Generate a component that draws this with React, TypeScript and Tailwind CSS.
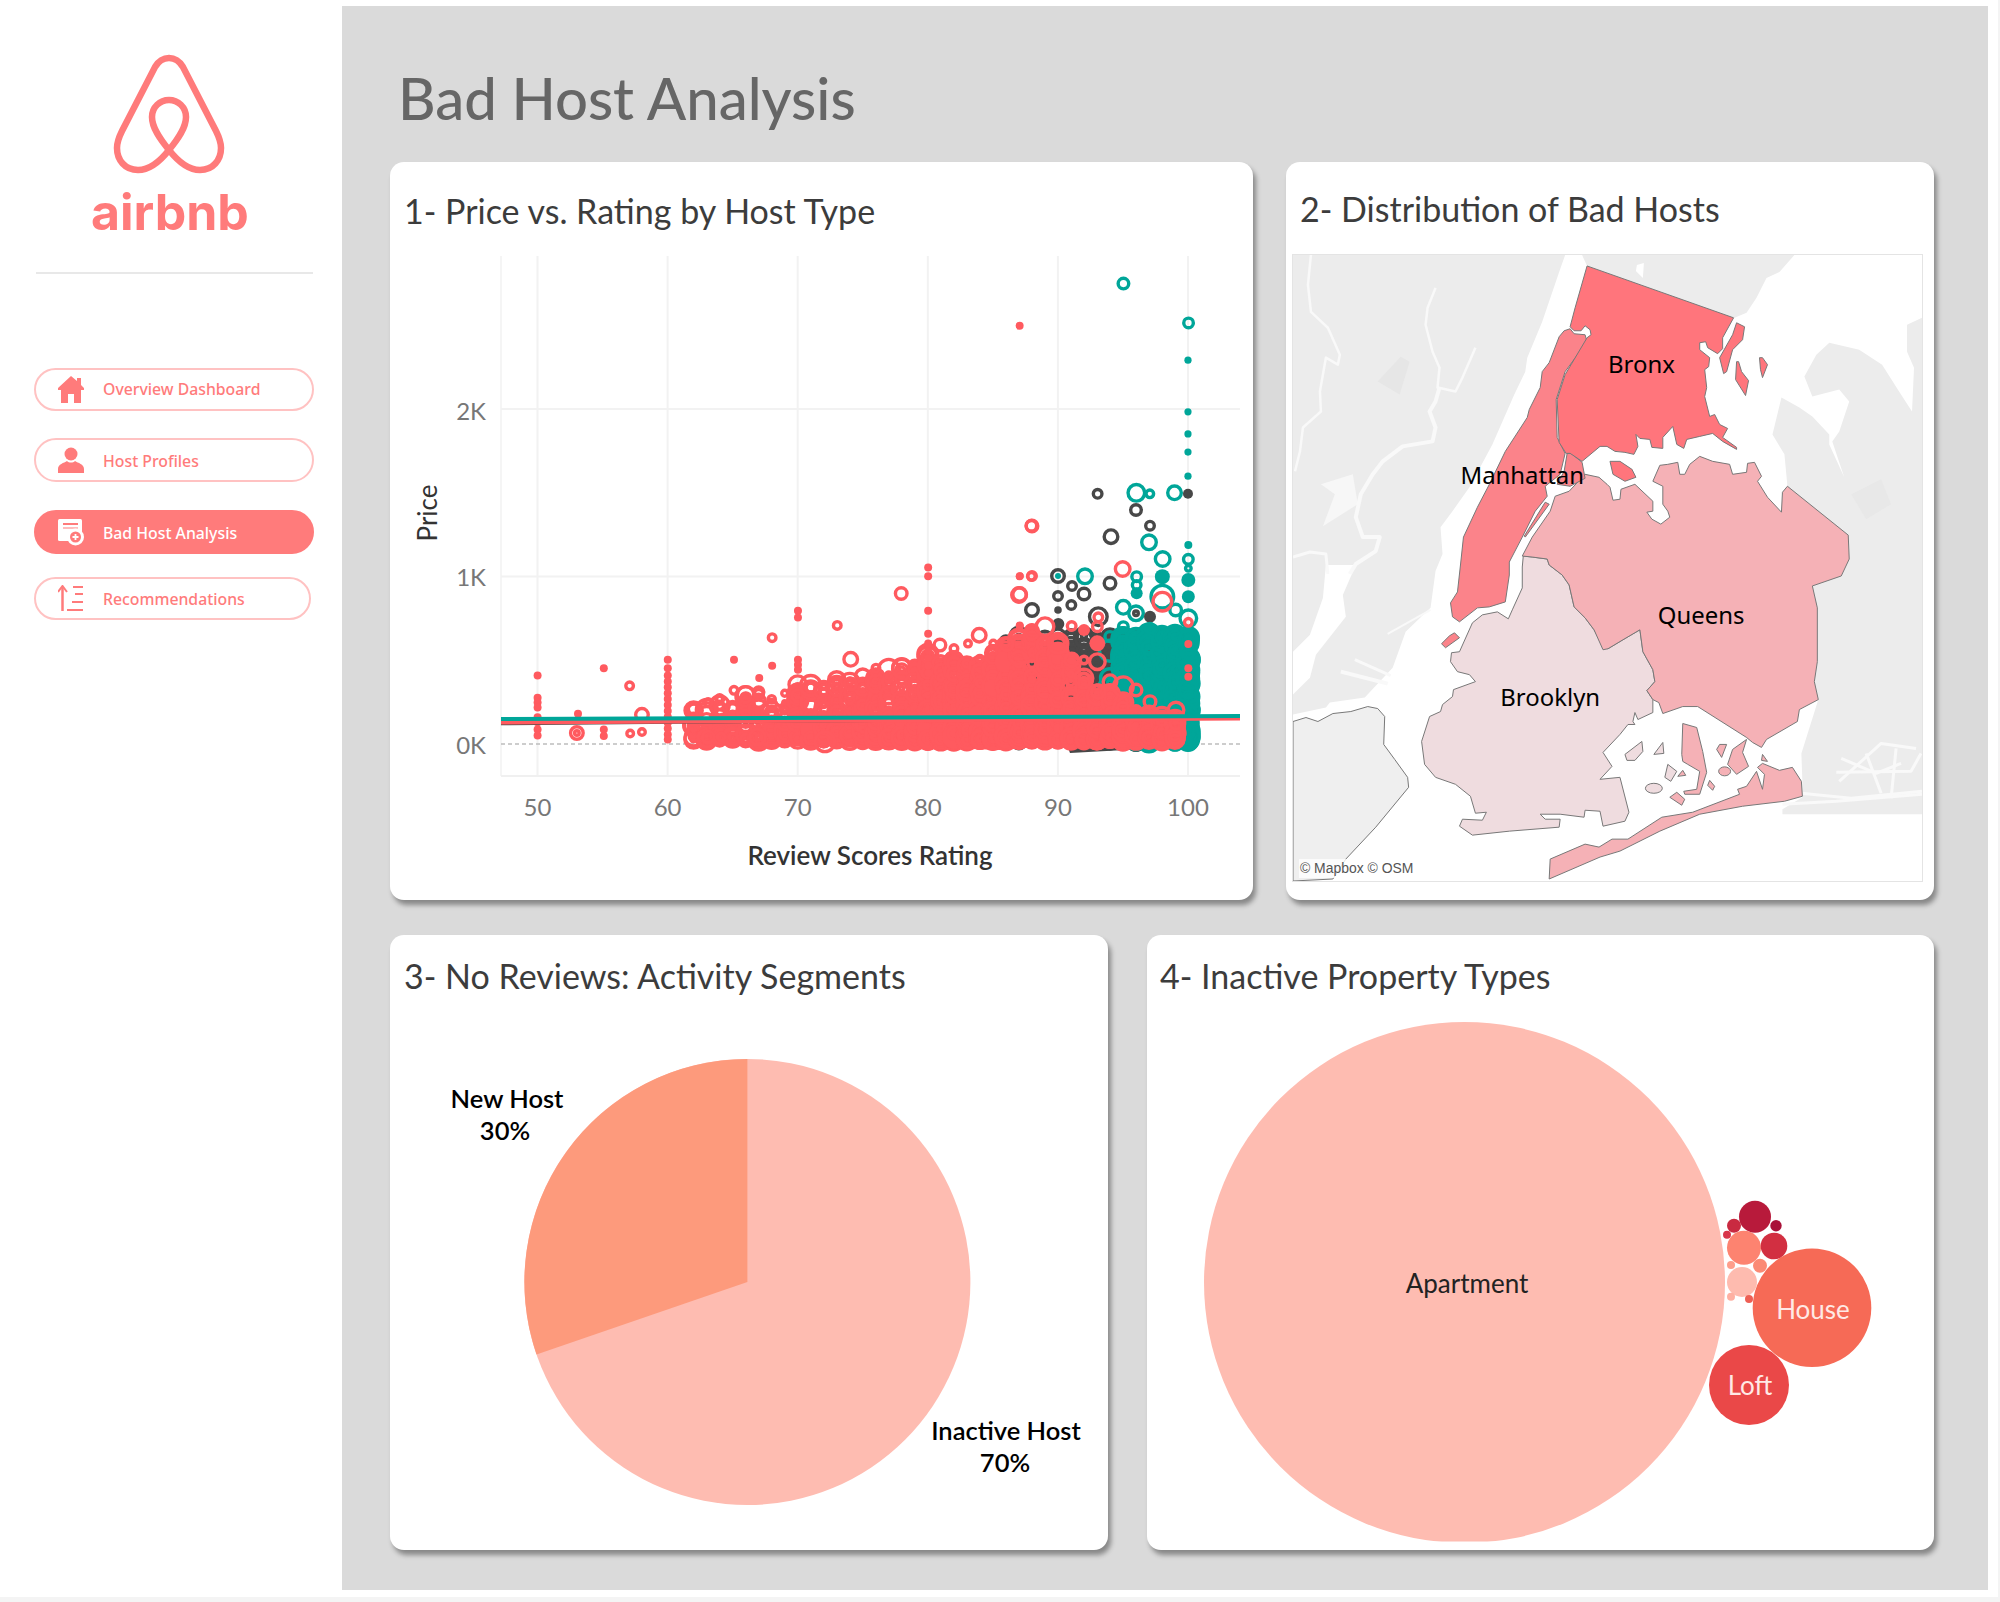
import React from 'react';

const PINK = '#ff5a5f';
const TEAL = '#00a699';
const DARK = '#484848';

type Dot = { x: number; y: number; r: number; c: string; solid?: boolean };

// page coordinates of the plot
const px = (rating: number) => 537.5 + (rating - 50) * 13.01;
const py = (price: number) => 744 - price * 0.1675;
// positions were read off a stretched crop, so convert them
const zx = (v: number) => 390 + v / 1.782;
const zy = (v: number) => 150 + v / 2.036;
const qx = (v: number) => 1000 + v / 3;
const qy = (v: number) => 500 + v / 3;

function rng(seed: number) {
  let s = seed;
  return () => {
    s = (s + 0x6d2b79f5) | 0;
    let t = Math.imul(s ^ (s >>> 15), 1 | s);
    t = (t + Math.imul(t ^ (t >>> 7), 61 | t)) ^ t;
    return ((t ^ (t >>> 14)) >>> 0) / 4294967296;
  };
}

const pinkTop: [number, number][] = [
  [60, 240], [65, 280], [70, 360], [75, 410], [80, 500], [83, 500], [86, 580],
  [88, 680], [90, 600], [92, 400], [94, 300], [95, 250], [97, 180], [100, 130],
];

function topAt(x: number) {
  for (let i = 0; i < pinkTop.length - 1; i++) {
    const [a, av] = pinkTop[i];
    const [b, bv] = pinkTop[i + 1];
    if (x >= a && x <= b) return av + ((bv - av) * (x - a)) / (b - a);
  }
  return 100;
}

function buildDots() {
  const rand = rng(42);
  const dark: Dot[] = [];
  const teal: Dot[] = [];
  const pink: Dot[] = [];
  for (let x = 86; x <= 97; x++) {
    for (let i = 0; i < 38; i++) {
      dark.push({ x: px(x), y: py(10 + rand() * 640), r: 4 + rand() * 7, c: DARK });
    }
  }
  for (let x = 94; x <= 100; x++) {
    const n = x === 94 ? 12 : 110;
    for (let i = 0; i < n; i++) {
      teal.push({ x: px(x), y: py(15 + Math.pow(rand(), 1.2) * 640), r: 4 + rand() * 9, c: TEAL });
    }
  }
  for (let x = 62; x <= 99; x++) {
    const n = x < 70 ? 20 : x < 75 ? 34 : x < 80 ? 56 : x < 90 ? 100 : 56;
    const bump = x % 10 === 0 ? 1.1 : 1;
    for (let i = 0; i < n; i++) {
      const u = Math.pow(rand(), 1.9);
      pink.push({ x: px(x), y: py(25 + (topAt(x) * bump - 25) * u), r: 3.5 + rand() * 8.5, c: PINK, solid: rand() < 0.06 });
    }
  }
  return { dark, teal, pink };
}

const zdots: [number, number][] = [
  [263, 1070], [263, 1115], [263, 1125], [263, 1135], [263, 1155], [263, 1165], [263, 1180], [263, 1192],
  [335, 1148], [381, 1055], [381, 1180], [381, 1193], [613, 1038], [681, 1050], [658, 1075],
  [727, 938], [727, 952], [727, 1038], [727, 1048], [727, 1058], [959, 850], [959, 868], [959, 938],
  [959, 985], [959, 1005], [959, 1020], [959, 1035], [959, 1050], [959, 1065],
  [1122, 358], [1122, 868], [1122, 968],
  [495, 1038], [495, 1055], [495, 1070], [495, 1082], [495, 1094], [495, 1106], [495, 1118], [495, 1130], [495, 1142],
  [495, 1154], [495, 1166], [495, 1178], [495, 1190], [495, 1200],
];
const zrings: [number, number, number][] = [
  [333, 1187, 8], [333, 1187, 4], [427, 1091, 5.5], [428, 1188, 5], [449, 1150, 8], [449, 1185, 5], [681, 993, 5.5], [797, 968, 5.5],
  [821, 1037, 8.5], [911, 903, 7.5], [542, 1142, 8.5], [590, 1140, 7.5], [567, 1125, 5.5], [567, 1195, 7.5], [590, 1195, 5.5],
  [634, 1115, 6.5], [613, 1100, 5.5], [655, 1195, 9.5], [775, 1205, 11.5], [821, 1087, 7.5], [866, 1055, 5.5],
  [1143, 765, 7], [1122, 905, 8.5], [1143, 868, 5.5], [980, 1008, 7.5], [1005, 1015, 5.5], [1050, 988, 8.5], [1100, 1006, 7.5],
  [1030, 1005, 5], [1075, 1005, 5],
];
// [x, y, r, colour, solid] in the square crop of the dense corner
const qrings: [number, number, number, string, boolean?][] = [
  [333, 110, 8.5, DARK], [408, 30, 7, DARK], [450, 77, 6, DARK], [447, 127, 9, TEAL], [488, 177, 9, TEAL],
  [174, 228, 8, DARK], [174, 228, 3, TEAL, true], [255, 229, 9, TEAL], [216, 258, 6, DARK], [330, 250, 7.5, DARK],
  [252, 282, 7.5, DARK], [174, 288, 6, DARK], [214, 315, 6, DARK], [174, 330, 3.8, DARK, true], [96, 330, 8, DARK],
  [370, 322, 8.5, TEAL], [408, 340, 9, TEAL], [408, 340, 4, DARK], [410, 230, 6.5, TEAL], [410, 255, 6, TEAL],
  [410, 280, 6, TEAL, true], [487, 230, 7.5, TEAL, true], [487, 290, 13, TEAL], [527, 330, 7.5, TEAL], [565, 135, 4, TEAL, true],
  [565, 178, 6.5, TEAL], [565, 205, 4.5, TEAL], [565, 240, 7, TEAL, true], [565, 290, 6.5, TEAL, true], [565, 355, 10, TEAL],
  [295, 350, 10.5, DARK], [175, 372, 6, DARK, true], [450, 350, 6, DARK, true], [370, 380, 6.5, TEAL], [450, 385, 6.5, TEAL],
  [96, 78, 7.5, PINK], [368, 207, 9, PINK], [60, 228, 3.8, PINK, true], [96, 228, 6, PINK], [57, 285, 9, PINK],
  [60, 378, 3.8, PINK, true], [135, 380, 10.5, PINK], [20, 433, 8, PINK], [174, 430, 11.5, PINK], [215, 378, 6, PINK],
  [295, 352, 6, PINK], [292, 380, 6.5, PINK], [252, 390, 6, PINK, true], [292, 430, 8, PINK, true], [292, 485, 9.5, PINK],
  [215, 480, 8.5, PINK], [252, 480, 5.5, PINK], [487, 305, 11, PINK], [565, 367, 5.5, PINK], [565, 432, 4, PINK, true],
  [565, 505, 4, PINK, true], [565, 530, 4, PINK, true], [370, 560, 11.5, PINK], [330, 545, 8.5, PINK], [450, 605, 7.5, PINK],
  [528, 630, 9.5, PINK], [528, 670, 7.5, PINK], [408, 570, 7.5, PINK], [295, 575, 8.5, PINK],
];

const { dark, teal, pink } = buildDots();

function Mark({ d }: { d: Dot }) {
  if (d.solid) return <circle cx={d.x} cy={d.y} r={d.r} fill={d.c} />;
  return <circle cx={d.x} cy={d.y} r={Math.max(d.r - 1.7, 1.5)} fill="none" stroke={d.c} strokeWidth={3.4} />;
}

function ScatterChart() {
  const axisNum = "font-['Lato',sans-serif] text-[24px] fill-[#777777]";
  const manual = qrings.map(([x, y, r, c, solid]) => ({ x: qx(x), y: qy(y), r, c, solid }));
  return (
    <svg viewBox="390 252 863 648" className="block w-[863px] h-[648px]">
      {[50, 60, 70, 80, 90, 100].map((t) => (
        <line key={t} x1={px(t)} x2={px(t)} y1={256} y2={776} stroke="#f2f2f2" strokeWidth={2} />
      ))}
      <line x1={501} x2={501} y1={256} y2={776} stroke="#f2f2f2" strokeWidth={1.5} />
      <line x1={501} x2={1240} y1={776} y2={776} stroke="#f0f0f0" strokeWidth={2} />
      <line x1={501} x2={1240} y1={409} y2={409} stroke="#f2f2f2" strokeWidth={2} />
      <line x1={501} x2={1240} y1={576.5} y2={576.5} stroke="#f2f2f2" strokeWidth={2} />
      <line x1={501} x2={1240} y1={744} y2={744} stroke="#bdbdbd" strokeWidth={1.5} strokeDasharray="4 3" />

      <path d="M1065 740 L1080 655 L1112 645 L1125 720 L1125 750 L1070 753 Z" fill={DARK} />
      {dark.map((d, i) => <Mark key={i} d={d} />)}
      <path d="M1122 680 L1135 665 L1180 660 L1190 680 L1191 745 L1160 750 L1122 745 Z" fill={TEAL} />
      {teal.map((d, i) => <Mark key={i} d={d} />)}
      <path d="M770 744 L780 732 L863 722 L927 708 L992 698 L1031 678 L1057 688 L1083 710 L1122 725 L1148 733 L1148 738 L1000 750 L860 745 Z" fill={PINK} />
      {pink.map((d, i) => <Mark key={i} d={d} />)}
      {zdots.map(([x, y], i) => <circle key={i} cx={zx(x)} cy={zy(y)} r={4} fill={PINK} />)}
      {zrings.map(([x, y, r], i) => <Mark key={i} d={{ x: zx(x), y: zy(y), r, c: PINK }} />)}
      {manual.map((d, i) => <Mark key={i} d={d} />)}
      <Mark d={{ x: zx(1307), y: zy(272), r: 7, c: TEAL }} />
      <Mark d={{ x: zx(1423), y: zy(352), r: 6.5, c: TEAL }} />
      {[428, 533, 578, 615, 664].map((y) => <circle key={y} cx={zx(1422)} cy={zy(y)} r={3.6} fill={TEAL} />)}
      <Mark d={{ x: zx(1261), y: zy(700), r: 6, c: DARK }} />
      <Mark d={{ x: zx(1330), y: zy(698), r: 10, c: TEAL }} />
      <Mark d={{ x: zx(1354), y: zy(700), r: 5.5, c: TEAL }} />
      <Mark d={{ x: zx(1398), y: zy(698), r: 8.5, c: TEAL }} />
      <circle cx={zx(1422)} cy={zy(700)} r={5} fill={DARK} />

      <line x1={501} x2={1240} y1={724.5} y2={718} stroke={DARK} strokeWidth={1.5} />
      <line x1={501} x2={1240} y1={722} y2={718} stroke={PINK} strokeWidth={5} />
      <line x1={501} x2={1240} y1={719} y2={716} stroke={TEAL} strokeWidth={4} />

      <text x={486} y={420} textAnchor="end" className={axisNum}>2K</text>
      <text x={486} y={586} textAnchor="end" className={axisNum}>1K</text>
      <text x={486} y={754} textAnchor="end" className={axisNum}>0K</text>
      {[50, 60, 70, 80, 90, 100].map((t) => (
        <text key={t} x={px(t)} y={816} textAnchor="middle" className={axisNum}>{t}</text>
      ))}
      <text x={870} y={865} textAnchor="middle" className="font-['Lato',sans-serif] text-[26px] font-semibold fill-[#333333]">
        Review Scores Rating
      </text>
      <text transform="translate(437 513) rotate(-90)" textAnchor="middle" className="font-['Lato',sans-serif] text-[26px] fill-[#333333]">
        Price
      </text>
    </svg>
  );
}

const BRONX = '295,11 442,63 431,83 431,94 426,99 416,93 414,87 408,88 408,95 418,103 417,112 413,115 415,133 413,142 418,162 423,160 428,170 436,174 431,183 445,193 445,195 431,187 421,179 408,182 395,185 392,194 385,190 381,172 371,183 371,194 360,193 358,185 348,184 344,180 346,192 342,200 333,198 323,197 315,192 308,192 290,207 278,199 274,199 267,188 265,145 273,120 295,83 299,80 298,75 293,71 289,76 282,76 278,72 283,53';
const BRONX_BITS = [
  '445,68 453,72 451,85 441,95 435,117 432,119 428,103 441,80',
  '445,107 447,107 450,117 457,126 454,141 444,125',
  '468,103 471,103 476,110 471,123 469,115',
  '318,207 328,207 340,215 344,223 333,227 321,220',
];
const MANHATTAN = '272,76 278,74 282,79 293,80 295,87 273,117 264,145 265,183 273,199 268,220 253,232 255,242 243,257 230,283 217,308 217,321 213,348 197,353 185,354 167,368 160,363 158,349 165,338 168,311 171,283 185,253 197,230 213,197 235,163 237,155 248,133 250,117 257,108 267,82';
const MANHATTAN_BITS = [
  '275,199 279,199 290,208 293,224 278,232 265,230 272,217',
  '257,250 233,283 232,282 253,248',
  '149,390 157,382 162,379 167,384 153,394',
];
const QUEENS = '230,302 240,283 258,257 263,242 277,237 293,220 307,223 315,230 318,233 321,246 328,245 329,235 343,230 361,247 361,257 355,258 360,265 369,270 378,263 376,257 371,250 371,232 361,227 368,211 376,210 386,208 388,220 393,220 398,210 408,202 421,207 438,210 441,220 455,218 456,209 463,208 470,222 466,227 476,243 490,258 491,238 496,232 557,281 558,305 550,322 521,332 526,354 526,408 523,428 527,446 508,456 506,468 475,486 470,494 461,489 455,484 406,453 391,453 371,460 367,449 361,446 355,437 363,428 361,416 351,398 348,376 331,386 316,395 311,396 302,376 293,364 282,353 277,331 270,321 257,311 255,305 240,303';
const ROCKAWAY = '257,626 258,606 293,591 307,594 320,586 336,586 370,564 401,559 448,541 446,536 455,533 465,518 471,536 473,521 466,514 471,510 488,517 501,514 510,528 511,543 493,548 451,553 408,561 368,578 328,598 308,604';
const QUEENS_BITS = [
  '391,470 405,474 411,498 415,519 408,541 393,541 392,538 405,536 408,518 396,511 391,508 390,501',
  '436,511 441,496 455,486 451,499 457,513 445,521',
  '428,491 435,491 430,504 425,496',
  '471,501 476,508 470,507',
  '418,527 423,533 421,537 416,532',
  '391,517 394,522 386,523',
  '378,544 385,539 393,546 390,552',
];
const BROOKLYN = '190,361 205,358 216,365 220,356 230,334 230,313 231,302 240,303 255,305 257,311 270,321 277,331 282,353 293,364 302,376 312,394 316,395 331,386 348,376 351,398 361,416 363,428 355,437 361,446 361,459 346,466 343,459 341,468 343,471 336,471 328,481 311,499 320,513 308,526 328,524 337,559 333,568 311,573 308,558 293,557 292,564 268,561 248,561 253,566 268,566 267,574 217,578 180,582 167,573 170,566 190,567 194,559 183,560 178,543 163,531 143,524 132,511 129,488 137,463 148,458 150,451 160,443 161,436 183,428 177,421 165,418 158,408 159,399 167,398 180,369';
const BROOKLYN_BITS = [
  '333,501 350,488 351,498 343,507 335,507',
  '362,501 371,489 372,500',
  '376,511 385,518 379,528 373,524',
];
const STATEN = '0,468 13,464 25,468 40,460 58,458 75,453 85,455 92,463 91,491 102,506 115,524 116,534 83,574 53,606 40,626 0,628';
const NJ = '0,0 273,0 267,17 250,67 235,103 233,117 222,140 200,190 177,233 160,257 148,273 150,300 143,317 138,354 113,378 100,414 72,444 37,449 33,454 0,461';
const NORTH = '290,0 503,0 488,17 475,23 465,43 455,58 443,63 295,11';
const LONG_ISLAND = '538,88 568,95 591,110 608,137 621,157 623,113 616,97 616,70 631,63 631,561 491,561 491,556 511,544 511,528 510,500 527,446 523,428 526,408 526,354 521,332 550,322 558,305 557,281 496,232 493,200 481,180 490,143 508,153 521,162 538,180 538,190 553,223 541,187 548,177 558,147 548,135 521,142 513,122 525,100';

const WHITE_LINES: [string, number][] = [
  ['18,0 15,30 18,57 35,73 47,100 45,110 33,103 27,137 28,157 10,173 7,197 2,217', 2.5],
  ['143,33 135,53 133,70 140,97 147,113 145,133 163,137 170,123 183,93', 2.5],
  ['147,133 143,147 137,157 143,173 140,187 110,192 90,207 80,220 68,240 63,263 70,283 87,283 83,297 63,310 57,320', 4],
  ['0,303 17,298 33,300 35,320', 3],
  ['48,418 95,430', 4],
  ['62,406 98,422', 3],
  ['95,380 138,356', 2],
  ['545,519 620,518 630,500', 3],
  ['548,528 590,490 625,495', 3],
  ['575,500 590,540', 3],
  ['605,495 600,545', 3],
  ['550,505 585,520 610,510', 3],
  ['510,540 560,545 631,538', 3],
  ['491,551 545,548 631,541', 3],
];
const NEWARK = '33,311 30,344 17,381 0,398 0,441 17,424 23,401 53,363 50,341 63,311';

function BoroughMap() {
  const label = "font-['Noto_Sans',sans-serif] text-[24px] fill-black";
  const outline = { stroke: '#777777', strokeWidth: 1 };
  return (
    <svg viewBox="0 0 631 628" className="block w-[631px] h-[628px] border border-[#e4e4e4] bg-white">
      <polygon points={NJ} fill="#ececec" />
      <polygon points={NEWARK} fill="#ffffff" />
      <polygon points={NORTH} fill="#ececec" />
      <polygon points="345,10 352,8 351,23 344,16" fill="#ffffff" />
      <polygon points={LONG_ISLAND} fill="#ececec" />
      <polygon points="85,127 108,102 117,107 107,140" fill="#e6e6e6" />
      <polygon points="560,240 590,225 600,250 575,265" fill="#e8e8e8" />
      <polygon points="28,230 60,220 65,250 30,272 42,240" fill="#f7f7f7" />
      {WHITE_LINES.map(([pts, w], i) => (
        <polyline key={i} points={pts} fill="none" stroke="#f9f9f9" strokeWidth={w} strokeLinejoin="round" />
      ))}
      <polygon points={STATEN} fill="#efefef" {...outline} />

      <polygon points={BROOKLYN} fill="#efdcdf" {...outline} />
      {BROOKLYN_BITS.map((p) => <polygon key={p} points={p} fill="#efdcdf" {...outline} />)}
      <ellipse cx={362} cy={535} rx={8.5} ry={5} fill="#efdcdf" {...outline} />
      <polygon points={QUEENS} fill="#f5b1b6" {...outline} />
      <polygon points={ROCKAWAY} fill="#f5b1b6" {...outline} />
      {QUEENS_BITS.map((p) => <polygon key={p} points={p} fill="#f5b1b6" {...outline} />)}
      <ellipse cx={433} cy={518} rx={6} ry={4.5} fill="#f5b1b6" {...outline} />
      <polygon points={MANHATTAN} fill="#fb838a" {...outline} />
      {MANHATTAN_BITS.map((p) => <polygon key={p} points={p} fill="#fb838a" {...outline} />)}
      <polygon points={BRONX} fill="#ff757c" {...outline} />
      {BRONX_BITS.map((p) => <polygon key={p} points={p} fill="#ff757c" {...outline} />)}

      <text x={316} y={118} className={label}>Bronx</text>
      <text x={168} y={230} className={label}>Manhattan</text>
      <text x={366} y={370} className={label}>Queens</text>
      <text x={208} y={452} className={label}>Brooklyn</text>
      <rect x={6} y={606} width={119} height={19} fill="#ffffff" fillOpacity={0.8} />
      <text x={7} y={620} className="font-['Liberation_Sans',sans-serif] text-[14px] fill-[#555555]">© Mapbox © OSM</text>
    </svg>
  );
}

function PieChart() {
  const label = "font-['Lato',sans-serif] text-[25.5px] font-semibold fill-black";
  return (
    <svg viewBox="390 1026 718 524" className="block w-[718px] h-[524px]">
      <circle cx={747.4} cy={1282} r={223} fill="#febcb1" />
      <path d="M747.4 1282 L747.4 1059 A223 223 0 0 0 536.5 1354.5 Z" fill="#fd9a7c" />
      <text x={507} y={1108} textAnchor="middle" className={label}>New Host</text>
      <text x={505} y={1140} textAnchor="middle" className={label}>30%</text>
      <text x={1006} y={1440} textAnchor="middle" className={label}>Inactive Host</text>
      <text x={1005} y={1472} textAnchor="middle" className={label}>70%</text>
    </svg>
  );
}

const BUBBLES: [number, number, number, string][] = [
  [1755, 1216.7, 16, '#b81a3b'], [1734, 1225.7, 7, '#c92a41'], [1776, 1225.7, 5.7, '#a91138'], [1727, 1234.7, 4, '#d8354a'],
  [1744, 1247.7, 17, '#fd8370'], [1774, 1246, 13.3, '#d22f41'], [1731, 1265, 4, '#fe9e8b'], [1760, 1265.7, 7, '#fb8a75'],
  [1742, 1282, 15, '#febbaf'], [1731, 1296.7, 4, '#feb0a2'], [1749, 1299, 4, '#ee5f54'],
  [1812, 1307.7, 59.3, '#f66a56'], [1749, 1385, 40, '#ea4848'],
];

function BubbleChart() {
  const label = "font-['Lato',sans-serif] text-[26px]";
  return (
    <svg viewBox="1147 1026 787 524" className="block w-[787px] h-[524px] overflow-visible">
      <defs>
        <clipPath id="bubbleClip">
          <rect x={1147} y={1000} width={787} height={541.5} />
        </clipPath>
      </defs>
      <g clipPath="url(#bubbleClip)">
        <circle cx={1464.5} cy={1282.5} r={260.5} fill="#febcb1" />
        {BUBBLES.map(([x, y, r, c]) => <circle key={x + '-' + y} cx={x} cy={y} r={r} fill={c} />)}
      </g>
      <text x={1467} y={1293} textAnchor="middle" className={label + ' fill-[#222222]'}>Apartment</text>
      <text x={1813} y={1319} textAnchor="middle" className={label + ' fill-[#ffe9e5]'}>House</text>
      <text x={1750} y={1395} textAnchor="middle" className={label + ' fill-[#ffe9e5]'}>Loft</text>
    </svg>
  );
}

function AirbnbLogo() {
  return (
    <svg viewBox="80 50 180 200" className="block w-[180px] h-[200px]">
      <path
        d="M169 150 C158 164 148 170 138 170 C125 170 117 160 117 148 C117 142 119 137 122 131 L155 67 C158 62 162 58 169 58 C176 58 180 62 183 67 L216 131 C219 137 221 142 221 148 C221 160 213 170 200 170 C190 170 180 164 169 150 C160 139 152 128 152 117 C152 107 160 100 169 100 C178 100 186 107 186 117 C186 128 178 139 169 150 Z"
        fill="none"
        stroke="#ff7b7b"
        strokeWidth={6.5}
      />
      <text x={91} y={230} className="font-['Inter',sans-serif] text-[50px] font-bold fill-[#ff7b7b]">
        airbnb
      </text>
    </svg>
  );
}

const HomeIcon = () => (
  <svg viewBox="0 0 26 27" className="w-[26px] h-[27px]" fill="#ff7b7b">
    <path d="M13 0 L19 5 V2 H23 V9 L26 12 V14 H23 V27 H16 V18 H10 V27 H3 V14 H0 V12 Z" />
  </svg>
);
const PersonIcon = () => (
  <svg viewBox="0 0 26 27" className="w-[26px] h-[27px]" fill="#ff7b7b">
    <circle cx={13} cy={7} r={6.5} />
    <path d="M0 26 V22 C0 17 6 16 9 14 C11 16 15 16 17 14 C20 16 26 17 26 22 V26 Z" />
  </svg>
);
const ReportIcon = () => (
  <svg viewBox="0 0 26 27" className="w-[26px] h-[27px]">
    <rect x={0} y={0} width={24} height={22} rx={1.5} fill="#ffffff" />
    <rect x={5} y={4} width={15} height={2} fill="#ff7b7b" />
    <path d="M5 9 H20" stroke="#ff7b7b" strokeWidth={1} />
    <circle cx={17.5} cy={18} r={8.5} fill="#ffffff" />
    <circle cx={17.5} cy={18} r={5.5} fill="#ff7b7b" />
    <path d="M17.5 15 V21 M14.5 18 H20.5" stroke="#ffffff" strokeWidth={1.8} />
  </svg>
);
const SortIcon = () => (
  <svg viewBox="0 0 26 27" className="w-[26px] h-[27px]" stroke="#ff7b7b" fill="none">
    <path d="M4.5 26 V2" strokeWidth={2.5} />
    <path d="M0 7 L4.5 1 L9 7" strokeWidth={2} />
    <path d="M15 2 H25 M17 9 H25 M14 17 H25 M9 25 H25" strokeWidth={2} />
  </svg>
);

function NavPill({ label, icon, active, className, textClass }: { label: string; icon: React.ReactNode; active?: boolean; className: string; textClass?: string }) {
  return (
    <div
      className={
        'flex items-center rounded-full border-2 pl-[22px] gap-[19px] text-[15.8px] font-medium font-[\'Noto_Sans\',sans-serif] ' +
        (active ? 'bg-[#ff7b7b] border-[#ff7b7b] text-white ' : 'bg-white border-[#ffc2c2] text-[#ff7b7b] ') +
        className
      }
    >
      {icon}
      <span className={textClass}>{label}</span>
    </div>
  );
}

function Card({ title, titleClass, className, children }: { title: string; titleClass: string; className: string; children: React.ReactNode }) {
  return (
    <section className={'bg-white rounded-[14px] shadow-[3px_5px_5px_rgba(0,0,0,0.38)] overflow-hidden ' + className}>
      <h2 className={"font-['Lato',sans-serif] text-[34px] leading-none text-[#3c3c3c] " + titleClass}>{title}</h2>
      {children}
    </section>
  );
}

export default function App() {
  return (
    <div className="w-[2000px] h-[1602px] bg-[#f4f4f4]">
      <div className="flex w-[1998px] h-[1597px] bg-white">
        <aside className="w-[342px] shrink-0 pl-[34px]">
          <div className="pt-[50px] pl-[46px]">
            <AirbnbLogo />
          </div>
          <div className="mt-[22px] ml-[2px] w-[277px] h-[2px] bg-[#e8e8e8]" />
          <div className="mt-[94px] flex flex-col">
            <NavPill label="Overview Dashboard" icon={<HomeIcon />} textClass="pt-[1px]" className="w-[280px] h-[43px]" />
            <NavPill label="Host Profiles" icon={<PersonIcon />} textClass="pt-[4px]" className="w-[280px] h-[44px] mt-[27px]" />
            <NavPill label="Bad Host Analysis" icon={<ReportIcon />} textClass="pt-[4px]" active className="w-[280px] h-[44px] mt-[28px]" />
            <NavPill label="Recommendations" icon={<SortIcon />} textClass="pt-[3px]" className="w-[277px] h-[43px] mt-[23px]" />
          </div>
        </aside>
        <main className="mt-[6px] w-[1646px] h-[1584px] bg-[#dadada] pl-[48px]">
          <h1 className="h-[156px] pt-[63px] pl-[8px] font-['Lato',sans-serif] text-[58px] leading-none font-medium text-[#666666]">
            Bad Host Analysis
          </h1>
          <div className="flex gap-[33px]">
            <Card title="1- Price vs. Rating by Host Type" titleClass="h-[90px] pt-[32px] pl-[14px]" className="w-[863px] h-[738px]">
              <ScatterChart />
            </Card>
            <Card title="2- Distribution of Bad Hosts" titleClass="h-[92px] pt-[30px] pl-[14px]" className="w-[648px] h-[738px]">
              <div className="px-[6px]">
                <BoroughMap />
              </div>
            </Card>
          </div>
          <div className="flex gap-[39px] mt-[35px]">
            <Card title="3- No Reviews: Activity Segments" titleClass="h-[91px] pt-[24px] pl-[14px]" className="w-[718px] h-[615px]">
              <PieChart />
            </Card>
            <Card title="4- Inactive Property Types" titleClass="h-[91px] pt-[24px] pl-[13px]" className="w-[787px] h-[615px]">
              <BubbleChart />
            </Card>
          </div>
        </main>
      </div>
    </div>
  );
}
